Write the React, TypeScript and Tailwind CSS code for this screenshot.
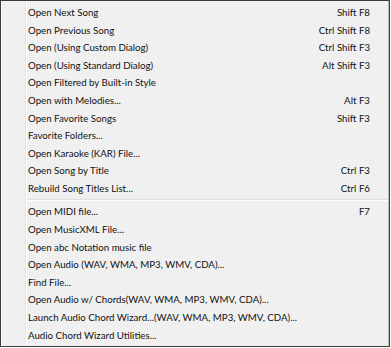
import React from "react";

type Item = { label: string; keys?: string } | "sep";

const items: Item[] = [
  { label: "Open Next Song", keys: "Shift F8" },
  { label: "Open Previous Song", keys: "Ctrl Shift F8" },
  { label: "Open (Using Custom Dialog)", keys: "Ctrl Shift F3" },
  { label: "Open (Using Standard Dialog)", keys: "Alt Shift F3" },
  { label: "Open Filtered by Built-in Style" },
  { label: "Open with Melodies...", keys: "Alt F3" },
  { label: "Open Favorite Songs", keys: "Shift F3" },
  { label: "Favorite Folders..." },
  { label: "Open Karaoke (KAR) File..." },
  { label: "Open Song by Title", keys: "Ctrl F3" },
  { label: "Rebuild Song Titles List...", keys: "Ctrl F6" },
  "sep",
  { label: "Open MIDI file...", keys: "F7" },
  { label: "Open MusicXML File..." },
  { label: "Open abc Notation music file" },
  { label: "Open Audio (WAV, WMA, MP3, WMV, CDA)..." },
  { label: "Find File..." },
  { label: "Open Audio w/ Chords(WAV, WMA, MP3, WMV, CDA)..." },
  { label: "Launch Audio Chord Wizard...(WAV, WMA, MP3, WMV, CDA)..." },
  { label: "Audio Chord Wizard Utilities..." },
];

export default function App() {
  return (
    <div className="w-[391px] h-[348px] bg-white">
      <div
        className="w-[390px] h-[347px] border border-[#3d3d3d] bg-[#f0f0f0] flex text-[9.7px] text-[#111]"
        style={{ fontFamily: "Lato, 'Noto Sans', sans-serif" }}
      >
        {/* gutter */}
        <div className="w-[25px] shrink-0 border-l border-l-white border-r border-r-[#e2e3e3]" />
        <div className="flex-1 flex flex-col pt-[2.5px] border-l border-l-white border-r border-r-[#bdbdbd]">
          {items.map((it, i) =>
            it === "sep" ? (
              <div key={i} className="h-[5.8px] flex flex-col justify-center">
                <div className="border-t border-t-[#e0e0e0] border-b border-b-white" />
              </div>
            ) : (
              <div key={i} className="h-[17.6px] flex items-center justify-between pl-[1px] pr-[18px]">
                <span>{it.label}</span>
                {it.keys && <span>{it.keys}</span>}
              </div>
            )
          )}
        </div>
      </div>
    </div>
  );
}
